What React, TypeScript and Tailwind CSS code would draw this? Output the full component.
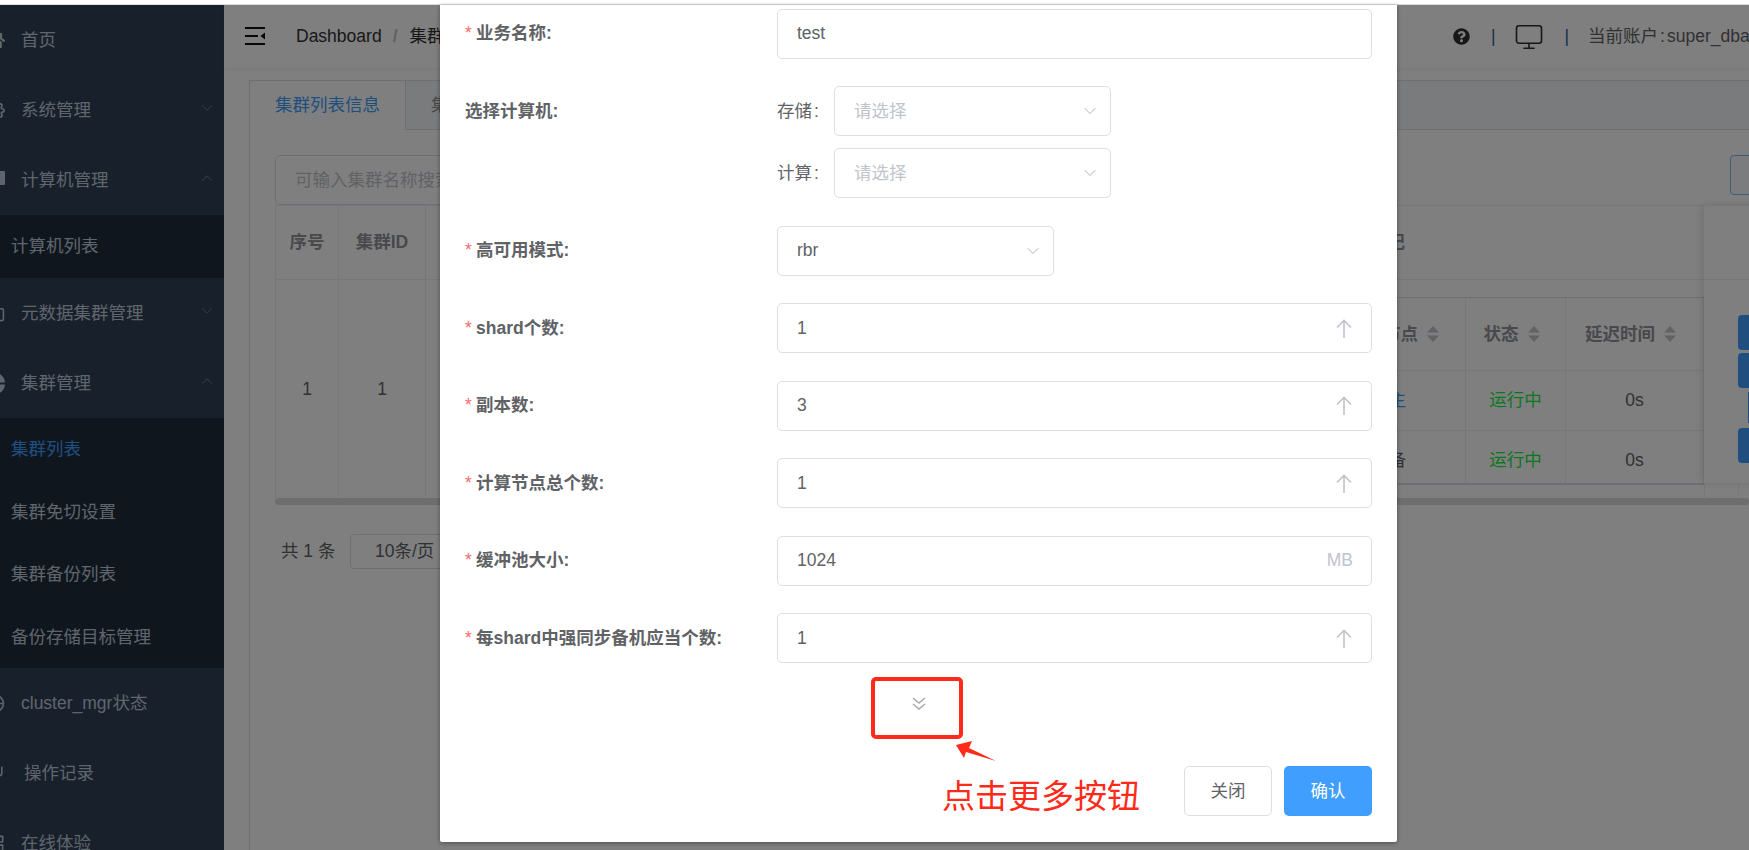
import { ChevronDown, ChevronUp, Monitor } from "lucide-react";
import { FaHome, FaQuestionCircle } from "react-icons/fa";
import { FiSettings, FiFolder, FiGlobe, FiCornerDownLeft, FiGrid } from "react-icons/fi";
import type { ReactNode } from "react";

const font = "font-['Liberation_Sans','Noto_Sans_CJK_SC',sans-serif]";

const MenuItem = ({ icon, label, arrow, textGap = "mr-[16px]" }: { icon: ReactNode; label: string; arrow?: "up" | "down"; textGap?: string }) => (
  <div className="flex items-center h-[70px] shrink-0 text-[#bfcbd9]">
    <span className={`ml-[-14px] w-[19px] flex justify-center shrink-0 ${textGap}`}>{icon}</span>
    <span>{label}</span>
    {arrow === "down" && <ChevronDown size={18} strokeWidth={1} className="ml-auto mr-[8px] -mt-[4px] text-[#909399]" />}
    {arrow === "up" && <ChevronUp size={18} strokeWidth={1} className="ml-auto mr-[8px] -mt-[4px] text-[#909399]" />}
  </div>
);

const SubItem = ({ label, active, height = "h-[62.5px]" }: { label: string; active?: boolean; height?: string }) => (
  <div className={`flex items-center pl-[11px] shrink-0 ${height} ${active ? "text-[#409eff]" : "text-[#bfcbd9]"}`}>{label}</div>
);

const ScreenIcon = () => (
  <svg width="19" height="19" viewBox="0 0 19 19" fill="currentColor">
    <rect x="0" y="0" width="19" height="14" rx="1" />
    <rect x="5" y="15.5" width="9" height="3" />
  </svg>
);

const ClusterIcon = () => (
  <svg width="21" height="21" viewBox="0 0 21 21" fill="currentColor">
    <path d="M0 9.5a10.5 10.5 0 0 1 21 0zM0 11.5h21a10.5 10.5 0 0 1-21 0z" />
  </svg>
);

const Sidebar = () => (
  <aside className="w-[224px] shrink-0 bg-[#304156] flex flex-col overflow-hidden">
    <MenuItem icon={<FaHome size={19} />} label="首页" />
    <MenuItem icon={<FiSettings size={19} />} label="系统管理" arrow="down" />
    <MenuItem icon={<ScreenIcon />} label="计算机管理" arrow="up" />
    <div className="bg-[#1f2d3d]">
      <SubItem label="计算机列表" height="h-[63px]" />
    </div>
    <MenuItem icon={<FiFolder size={19} />} label="元数据集群管理" arrow="down" />
    <MenuItem icon={<ClusterIcon />} label="集群管理" arrow="up" />
    <div className="bg-[#1f2d3d]">
      <SubItem label="集群列表" active />
      <SubItem label="集群免切设置" />
      <SubItem label="集群备份列表" />
      <SubItem label="备份存储目标管理" />
    </div>
    <MenuItem icon={<FiGlobe size={19} />} label="cluster_mgr状态" />
    <MenuItem icon={<FiCornerDownLeft size={19} />} label="操作记录" textGap="mr-[19px]" />
    <MenuItem icon={<FiGrid size={19} />} label="在线体验" />
  </aside>
);

const Header = () => (
  <header className="h-[63px] shrink-0 bg-white flex items-center shadow-[0_1px_4px_rgba(0,21,41,0.08)] pl-[21px] whitespace-nowrap overflow-hidden relative">
    <svg width="20" height="18" viewBox="0 0 20 18" className="shrink-0 text-[#111] -mt-[2px]" fill="currentColor">
      <rect x="0" y="0" width="20" height="2" />
      <rect x="0" y="8" width="13" height="2" />
      <path d="M20 5.5V12.5L15.5 9z" />
      <rect x="0" y="16" width="20" height="2" />
    </svg>
    <span className="ml-[31px] text-[#303133]">Dashboard</span>
    <span className="ml-[11px] text-[#c0c4cc] font-bold">/</span>
    <span className="ml-[12px] text-[#303133]">集群管理</span>
    <div className="ml-auto flex items-center text-[#606266] w-[296px] shrink-0">
      <FaQuestionCircle size={17} className="text-[#303133] shrink-0" />
      <span className="ml-[21px] text-[#1f5f9f]">|</span>
      <Monitor size={30} strokeWidth={1.3} className="ml-[18px] text-[#303133] shrink-0" />
      <span className="ml-[21px] text-[#1f5f9f]">|</span>
      <span className="ml-[19px]">当前账户<span className="ml-[2px]">:</span><span className="ml-[2px]">super_dba</span></span>
    </div>
  </header>
);

const SortCaret = () => (
  <svg width="12" height="16" viewBox="0 0 12 16" className="ml-[9px] shrink-0 text-[#c0c4cc]" fill="currentColor">
    <path d="M6 0L12 6.5H0zM6 16L0 9.5H12z" />
  </svg>
);

const Col = ({ width, title, value }: { width: string; title: string; value?: string }) => (
  <div className={`${width} shrink-0 border-r border-[#ebeef5]`}>
    <div className="h-[74px] border-b border-[#ebeef5] flex items-center justify-center font-bold text-[#909399]">{title}</div>
    <div className="h-[219px] flex items-center justify-center">{value}</div>
  </div>
);

const NestedCol = ({ width, title, rows }: { width: string; title: string; rows: ReactNode[] }) => (
  <div className={`${width} shrink-0 border-r border-[#ebeef5]`}>
    <div className="h-[73px] border-b border-[#ebeef5] flex items-center justify-center pr-[8px] font-bold text-[#909399]">
      {title}
      <SortCaret />
    </div>
    <div className="h-[60px] border-b border-[#ebeef5] flex items-center justify-center">{rows[0]}</div>
    <div className="h-[52px] pt-[6px] flex items-center justify-center">{rows[1]}</div>
  </div>
);

const ClusterTable = () => (
  <div className="relative ml-[25px] w-[1474px] text-[#606266]">
    <div className="flex border-t border-l border-[#ebeef5]">
      <Col width="w-[63px]" title="序号" value="1" />
      <Col width="w-[87px]" title="集群ID" value="1" />
      <Col width="w-[610px]" title="业务名称" value="test" />
      {/* 嵌套的节点表 */}
      <div className="w-[669px] shrink-0 border-r border-[#ebeef5]">
        <div className="h-[74px] border-b border-[#ebeef5] flex items-center justify-center font-bold text-[#909399]">节点标记</div>
        <div className="h-[17px]" />
        <div className="flex border-t border-b-2 border-[#dcdfe6] w-[668px]">
          <div className="w-[294px] shrink-0 border-r border-[#ebeef5]" />
          <NestedCol width="w-[136px]" title="主备节点" rows={[<span className="text-[#409eff]">主</span>, "备"]} />
          <NestedCol width="w-[100px]" title="状态" rows={[<span className="text-[#10f040]">运行中</span>, <span className="text-[#10f040]">运行中</span>]} />
          <NestedCol width="w-[138px]" title="延迟时间" rows={["0s", "0s"]} />
        </div>
      </div>
      <Col width="w-[34px]" title="" />
    </div>
    <div className="h-[7px] w-full rounded bg-[#dcdcdc] -mt-[1px]" />
    {/* 固定的操作列 */}
    <div className="absolute left-[1429px] top-0 w-[60px] h-[278px] bg-white shadow-[-2px_0_8px_rgba(0,0,0,0.12)] border-t border-[#ebeef5]">
      <div className="h-[74px] border-b border-[#ebeef5]" />
      <div className="flex flex-col pl-[34px] pt-[35px] gap-[3px]">
        <div className="h-[35px] w-[30px] rounded bg-[#409eff]" />
        <div className="h-[35px] w-[30px] rounded bg-[#409eff]" />
        <div className="h-[31px] ml-[10px] w-[20px] mt-[1px] bg-white border-l-2 border-[#409eff]" />
        <div className="h-[35px] w-[30px] rounded bg-[#409eff] mt-[2px]" />
      </div>
    </div>
  </div>
);

const PageBody = () => (
  <div className="flex-1 bg-white pt-[12px] pl-[25px] overflow-hidden">
    <div className="border-t border-l border-[#dcdfe6] h-[900px] text-[17.5px]">
      <div className="h-[49px] flex bg-[#f5f7fa] border-b border-[#dcdfe6]">
        <div className="w-[156px] bg-white border-r border-[#dcdfe6] h-[49px] flex items-center justify-center text-[#409eff]">集群列表信息</div>
        <div className="pl-[25px] flex items-center text-[#909399]">集群操作记录</div>
      </div>
      <div className="flex pt-[25px] pl-[25px] pr-0 justify-between">
        <div className="w-[400px] h-[50px] border border-[#dcdfe6] rounded-[5px] flex items-center pl-[19px] text-[#c0c4cc]">可输入集群名称搜索</div>
        <div className="w-[60px] h-[40px] border border-[#7ab8f5] bg-[#f7f9fc] rounded-[4px] mr-[-41px]" />
      </div>
      <ClusterTable />
      <div className="flex items-center mt-[29px] ml-[31px] text-[#606266] whitespace-nowrap">
        <span className="w-[69px]">共 1 条</span>
        <div className="w-[130px] h-[35px] border border-[#dcdfe6] rounded-[4px] flex items-center pl-[24px]">10条/页</div>
      </div>
    </div>
  </div>
);

const UpArrow = () => (
  <svg width="16" height="19" viewBox="0 0 16 19" fill="none" stroke="currentColor" strokeWidth="1.6" className="mr-[1px]">
    <path d="M1 8.5L8 1.5L15 8.5M8 1.5V19" />
  </svg>
);

const TextInput = ({ value, suffix }: { value: string; suffix?: ReactNode }) => (
  <div className="w-[595px] h-[50px] border border-[#dcdfe6] rounded-[5px] flex items-center pl-[19px] pr-[18px] text-[#606266]">
    <span>{value}</span>
    {suffix && <span className="ml-auto flex items-center text-[#c0c4cc]">{suffix}</span>}
  </div>
);

const SelectBox = ({ value, placeholder, width }: { value?: string; placeholder?: string; width: string }) => (
  <div className={`${width} h-[50px] border border-[#dcdfe6] rounded-[5px] flex items-center pl-[19px] pr-[10px]`}>
    <span className={value ? "text-[#606266]" : "text-[#c0c4cc]"}>{value ?? placeholder}</span>
    <ChevronDown size={20} strokeWidth={1.1} className="ml-auto text-[#a8abb2]" />
  </div>
);

const FormRow = ({ label, required = true, children }: { label: string; required?: boolean; children: ReactNode }) => (
  <div className="flex mb-[27.5px]">
    <div className="w-[312px] shrink-0 h-[50px] flex items-center font-bold text-[#606266]">
      {required && <span className="text-[#f56c6c] font-normal w-[11px] shrink-0">*</span>}
      {label}
    </div>
    {children}
  </div>
);

const Modal = () => (
  <div className="absolute left-[440px] top-[5px] w-[957px] h-[837px] bg-white rounded-b-[2px] shadow-[0_1px_4px_rgba(0,0,0,0.4)] px-[25px] pt-[3.5px] text-[17.5px]">
    <FormRow label="业务名称:">
      <TextInput value="test" />
    </FormRow>
    <FormRow label="选择计算机:" required={false}>
      <div className="flex flex-col gap-[12px] text-[#606266]">
        <div className="flex items-center">
          <span className="w-[57px]">存储<span className="ml-[2px]">:</span></span>
          <SelectBox placeholder="请选择" width="w-[277px]" />
        </div>
        <div className="flex items-center">
          <span className="w-[57px]">计算<span className="ml-[2px]">:</span></span>
          <SelectBox placeholder="请选择" width="w-[277px]" />
        </div>
      </div>
    </FormRow>
    <FormRow label="高可用模式:">
      <SelectBox value="rbr" width="w-[277px]" />
    </FormRow>
    <FormRow label="shard个数:">
      <TextInput value="1" suffix={<UpArrow />} />
    </FormRow>
    <FormRow label="副本数:">
      <TextInput value="3" suffix={<UpArrow />} />
    </FormRow>
    <FormRow label="计算节点总个数:">
      <TextInput value="1" suffix={<UpArrow />} />
    </FormRow>
    <FormRow label="缓冲池大小:">
      <TextInput value="1024" suffix="MB" />
    </FormRow>
    <FormRow label="每shard中强同步备机应当个数:">
      <TextInput value="1" suffix={<UpArrow />} />
    </FormRow>
    <div className="flex justify-center mt-[34px]">
      <svg width="14" height="13" viewBox="0 0 14 13" fill="none" stroke="#a8a8a8" strokeWidth="1.5">
        <path d="M1 1L7 6L13 1M1 7L7 12L13 7" />
      </svg>
    </div>
    <div className="flex justify-end gap-[12px] mt-[56px]">
      <div className="w-[88px] h-[50px] border border-[#dcdfe6] rounded-[5px] flex items-center justify-center text-[#606266]">关闭</div>
      <div className="w-[88px] h-[50px] bg-[#409eff] rounded-[5px] flex items-center justify-center text-white">确认</div>
    </div>
    {/* 截图上的红色标注 */}
    <div className="absolute left-[431px] top-[672px] w-[92px] h-[62px] border-[4px] border-[#ff2a1a] rounded-[5px]" />
    <svg width="44" height="24" viewBox="0 0 44 24" className="absolute left-[514px] top-[736px]" fill="#ff2a1a">
      <path d="M2 4L18 0L15 7L42 20L12 11L10 17z" />
    </svg>
    <div className="absolute left-[502px] top-[770px] text-[33px] leading-[44px] text-[#ff2a1a] whitespace-nowrap">点击更多按钮</div>
  </div>
);

export default function App() {
  return (
    <div className={`relative w-[1749px] h-[850px] overflow-hidden bg-white text-[17.5px] ${font}`}>
      <div className="h-[4px] bg-white" />
      <div className="h-[1px] bg-[#dfdfdf]" />
      <div className="flex h-[845px]">
        <Sidebar />
        <div className="flex-1 flex flex-col min-w-0">
          <Header />
          <PageBody />
        </div>
      </div>
      <div className="absolute left-0 right-0 top-[5px] bottom-0 bg-black/50" />
      <Modal />
    </div>
  );
}
